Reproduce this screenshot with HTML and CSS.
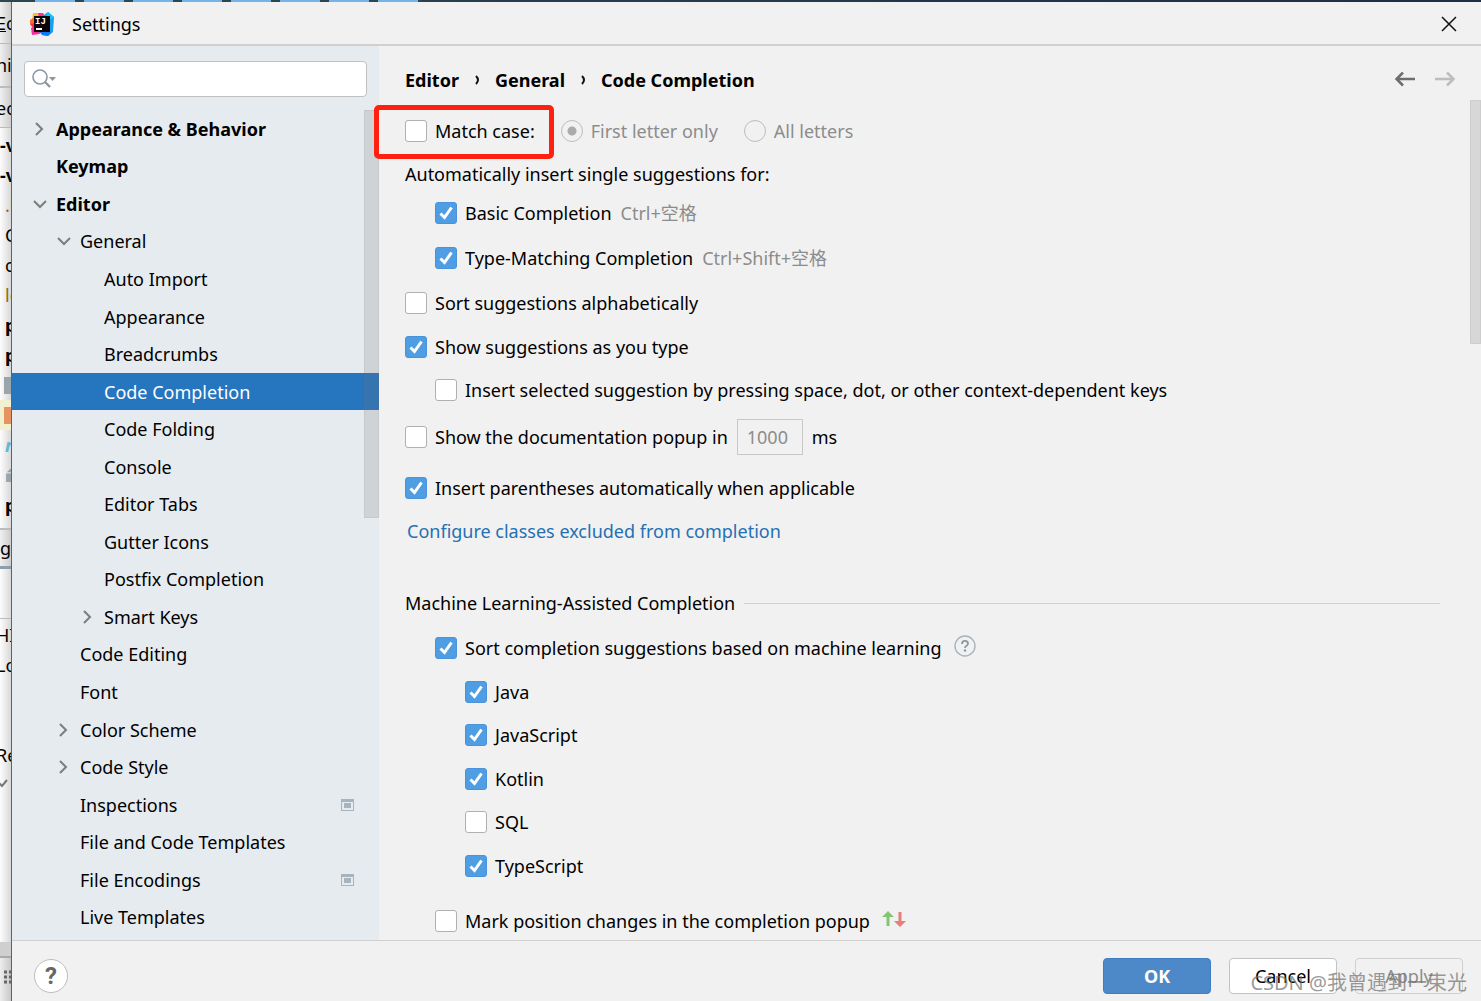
FILE: index.html
```html
<!DOCTYPE html>
<html lang="en">
<head>
<meta charset="utf-8">
<title>Settings</title>
<link rel="stylesheet" href="styles.css">
</head>
<body>
<div class="desktop-edge"></div>
<div class="workspace">
  <div class="backdrop" aria-hidden="true">
    <div class="bd-bar bd-menu"><span><u>E</u>c</span></div>
    <div class="bd-bar bd-nav">ni</div>
    <div class="bd-bar bd-tab">ec</div>
    <div class="bd-code">
      <b class="flush">-v</b>
      <b class="flush">-v</b>
      <span class="olive">.i</span>
      <span>C</span>
      <span>c</span>
      <span class="olive">lo</span>
      <b>p</b>
      <b>p</b>
      <span class="mark"><i class="square"></i></span>
      <span class="mark highlight"><i class="square orange"></i></span>
      <b class="cyan">r</b>
      <span class="mark"><svg width="10" height="20" viewBox="0 0 10 20"><path d="M3 8h7v12H3zM4 6l5-5h1v5z" fill="#9aa5ab"/></svg></span>
      <b>p</b>
    </div>
    <div class="bd-bar bd-tool">g</div>
    <div class="bd-log">
      <span>HI</span>
      <span>Lo</span>
      <span></span>
      <span></span>
      <span>Re</span>
      <svg width="11" height="20" viewBox="0 0 11 20"><path d="M-1 10l3 3 5-6" fill="none" stroke="#777" stroke-width="2"/></svg>
    </div>
    <div class="bd-status"></div>
    <div class="bd-dots"><svg width="11" height="14" viewBox="0 0 11 14"><path d="M4 2h3m2 0h2M4 7h3m2 0h2M4 12h3m2 0h2" stroke="#666" stroke-width="3"/></svg></div>
  </div>

  <div class="dialog" role="dialog" aria-label="Settings">
    <header class="titlebar">
      <svg class="logo" width="24" height="24" viewBox="0 0 24 24">
        <path d="M3 1l7 0 3 6-6 6-5-5z" fill="#fdb93a"/>
        <path d="M0 8l5-3 3 10-3 1-5-4z" fill="#f9702b"/>
        <path d="M8 1l5 0 3 5-6 3z" fill="#ff318c"/>
        <path d="M1 16l7-4 5 8-4 2-7 1z" fill="#f2309b"/>
        <path d="M0 12l5-1-2 5z" fill="#fe2857"/>
        <path d="M14 3l4-3 6 5-1 15-5 4-6-1-1-5z" fill="#1a9cf0"/>
        <path d="M16 3l2-3 6 5-4 3z" fill="#18c4f5"/>
        <path d="M10 20h11l-3 4-6-1z" fill="#087cfa"/>
        <rect x="4" y="4" width="16" height="16" fill="#0b0508"/>
        <text x="5" y="12" font-family="Liberation Mono, monospace" font-weight="700" font-size="9" fill="#fff">IJ</text>
        <rect x="6" y="16" width="6" height="2" fill="#fff"/>
      </svg>
      <span class="title">Settings</span>
      <button class="icon-button close" aria-label="Close">
        <svg width="16" height="16" viewBox="0 0 16 16"><path d="M1 1l14 14M15 1L1 15" stroke="#111" stroke-width="1.5"/></svg>
      </button>
    </header>

    <div class="body">
      <aside class="sidebar">
        <div class="search">
          <svg width="26" height="20" viewBox="0 0 26 20"><circle cx="8" cy="8" r="7" fill="none" stroke="#8b98a3" stroke-width="1.6"/><path d="M13 13l5 5" stroke="#8b98a3" stroke-width="2.4"/><path d="M17 8h7l-3.500 4z" fill="#8b98a3"/></svg>
          <input type="text" aria-label="Search settings">
        </div>
        <ul class="tree">
          <li class="top"><svg class="chev" viewBox="0 0 16 16"><path d="M4 2l6 6-6 6"/></svg>Appearance &amp; Behavior</li>
          <li class="top"><span class="chev"></span>Keymap</li>
          <li class="top"><svg class="chev" viewBox="0 0 16 16"><path d="M2 5l6 6 6-6"/></svg>Editor</li>
          <li class="l1"><svg class="chev" viewBox="0 0 16 16"><path d="M2 5l6 6 6-6"/></svg>General</li>
          <li class="l2"><span class="chev"></span>Auto Import</li>
          <li class="l2"><span class="chev"></span>Appearance</li>
          <li class="l2"><span class="chev"></span>Breadcrumbs</li>
          <li class="l2 selected"><span class="chev"></span>Code Completion</li>
          <li class="l2"><span class="chev"></span>Code Folding</li>
          <li class="l2"><span class="chev"></span>Console</li>
          <li class="l2"><span class="chev"></span>Editor Tabs</li>
          <li class="l2"><span class="chev"></span>Gutter Icons</li>
          <li class="l2"><span class="chev"></span>Postfix Completion</li>
          <li class="l2"><svg class="chev" viewBox="0 0 16 16"><path d="M4 2l6 6-6 6"/></svg>Smart Keys</li>
          <li class="l1"><span class="chev"></span>Code Editing</li>
          <li class="l1"><span class="chev"></span>Font</li>
          <li class="l1"><svg class="chev" viewBox="0 0 16 16"><path d="M4 2l6 6-6 6"/></svg>Color Scheme</li>
          <li class="l1"><svg class="chev" viewBox="0 0 16 16"><path d="M4 2l6 6-6 6"/></svg>Code Style</li>
          <li class="l1"><span class="chev"></span>Inspections<svg class="project" viewBox="0 0 13 12"><path d="M0 0h13v12H0zM1 3v8h11V3z" fill-rule="evenodd"/><path d="M3 4h7v5H3z"/></svg></li>
          <li class="l1"><span class="chev"></span>File and Code Templates</li>
          <li class="l1"><span class="chev"></span>File Encodings<svg class="project" viewBox="0 0 13 12"><path d="M0 0h13v12H0zM1 3v8h11V3z" fill-rule="evenodd"/><path d="M3 4h7v5H3z"/></svg></li>
          <li class="l1"><span class="chev"></span>Live Templates</li>
        </ul>
        <div class="scroll-thumb tree-thumb"></div>
      </aside>

      <main class="content">
        <div class="heading">
          <nav class="crumbs" aria-label="Breadcrumb">
            <span>Editor</span>
            <svg width="6" height="12" viewBox="0 0 6 12"><path d="M2 2q2 2 2 4q0 2-2 4"/></svg>
            <span>General</span>
            <svg width="6" height="12" viewBox="0 0 6 12"><path d="M2 2q2 2 2 4q0 2-2 4"/></svg>
            <span>Code Completion</span>
          </nav>
          <div class="history">
            <button class="icon-button" aria-label="Back"><svg width="20" height="16" viewBox="0 0 20 16"><path d="M20 7H2M8 .5L1.500 7L8 13.500" fill="none" stroke="#6e6e6e" stroke-width="2.600"/></svg></button>
            <button class="icon-button" aria-label="Forward" disabled><svg width="20" height="16" viewBox="0 0 20 16"><path d="M0 7h18M12 .5L18.500 7L12 13.500" fill="none" stroke="#bdbdbd" stroke-width="2.600"/></svg></button>
          </div>
        </div>

        <form class="options">
          <div class="row first">
            <label class="option case"><input type="checkbox">Match case:</label>
            <label class="option muted"><input type="radio" name="case" checked disabled>First letter only</label>
            <label class="option muted"><input type="radio" name="case" disabled>All letters</label>
            <div class="callout"></div>
          </div>
          <div class="row snug">Automatically insert single suggestions for:</div>
          <div class="row indent tight"><label class="option"><input type="checkbox" checked>Basic Completion</label><span class="shortcut">Ctrl+空格</span></div>
          <div class="row indent"><label class="option"><input type="checkbox" checked>Type-Matching Completion</label><span class="shortcut">Ctrl+Shift+空格</span></div>
          <div class="row"><label class="option"><input type="checkbox">Sort suggestions alphabetically</label></div>
          <div class="row medium"><label class="option"><input type="checkbox" checked>Show suggestions as you type</label></div>
          <div class="row indent snug"><label class="option"><input type="checkbox">Insert selected suggestion by pressing space, dot, or other context-dependent keys</label></div>
          <div class="row delay"><label class="option"><input type="checkbox">Show the documentation popup in</label><input class="field" type="text" value="1000" aria-label="Delay in milliseconds" disabled><span>ms</span></div>
          <div class="row snug"><label class="option"><input type="checkbox" checked>Insert parentheses automatically when applicable</label></div>
          <div class="row link-row snug"><a href="#">Configure classes excluded from completion</a></div>

          <div class="row section">Machine Learning-Assisted Completion</div>
          <div class="row indent">
            <label class="option"><input type="checkbox" checked>Sort completion suggestions based on machine learning</label>
            <svg class="hint" width="22" height="22" viewBox="0 0 22 22"><circle cx="11" cy="11" r="10" fill="none" stroke="#a9b3ba" stroke-width="1.400"/><path d="M8 9q0-3.200 3-3.200t3 2.700q0 1.500-1.700 2.500q-1.300.8-1.300 2" fill="none" stroke="#8b979f" stroke-width="1.800"/><circle cx="11" cy="15.500" r="1.200" fill="#8b979f"/></svg>
          </div>
          <div class="languages">
            <label class="option"><input type="checkbox" checked>Java</label>
            <label class="option"><input type="checkbox" checked>JavaScript</label>
            <label class="option"><input type="checkbox" checked>Kotlin</label>
            <label class="option"><input type="checkbox">SQL</label>
            <label class="option"><input type="checkbox" checked>TypeScript</label>
          </div>
          <div class="row indent last">
            <label class="option"><input type="checkbox">Mark position changes in the completion popup</label>
            <svg class="hint" width="24" height="18" viewBox="0 0 24 18"><path d="M4.500 16V7H0L6 1l6 6H7.500v9z" fill="#84c573"/><path d="M16.500 2v9H12l6 6 6-6h-4.500V2z" fill="#e57f7a"/></svg>
          </div>
        </form>
        <div class="scroll-thumb page-thumb"></div>
      </main>
    </div>

    <footer class="footer">
      <button class="help" aria-label="Help">?</button>
      <button class="button primary">OK</button>
      <button class="button">Cancel</button>
      <button class="button" disabled>Apply</button>
      <div class="watermark">CSDN @我曾遇到一束光</div>
    </footer>
  </div>
</div>
</body>
</html>
```
FILE: styles.css
```css
* { box-sizing: border-box; }

body {
  margin: 0;
  min-height: 100vh;
  display: flex;
  flex-direction: column;
  overflow: hidden;
  background: #f1f1f1;
  color: #000;
  font: 18px/28px "Noto Sans", "Noto Sans CJK SC", sans-serif;
}

button, input { font: inherit; color: inherit; margin: 0; }

.desktop-edge {
  height: 2px;
  background:
    repeating-linear-gradient(90deg, #74b4e8 0 40px, #2c4652 40px 49px) 35px 0 / 387px 2px no-repeat,
    linear-gradient(90deg, #2c4652, #1e2d44);
}

.workspace { flex: 1; display: flex; }

/* Sliver of the editor window behind the dialog */
.backdrop {
  width: 11px;
  flex: none;
  overflow: hidden;
  white-space: nowrap;
  display: flex;
  flex-direction: column;
  background: linear-gradient(90deg, #fdfdfd, #d8d8d8);
}
.bd-bar {
  flex: none;
  display: flex;
  align-items: center;
  text-indent: -4px;
  background: linear-gradient(90deg, #f0f0f0, #cccccc);
  border-bottom: 1px solid #bbb;
}
.bd-menu { height: 42px; }
.bd-nav { height: 44px; border-bottom-width: 2px; }
.bd-tab { height: 40px; }
.bd-code { padding-top: 2px; height: 400px; }
.bd-code > *, .bd-log > span { display: block; height: 30px; padding-left: 5px; line-height: 30px; }
.bd-code .flush, .bd-log > span { padding-left: 0; }
.bd-log > span { text-indent: -4px; }
.olive { color: #8a6d1f; }
.cyan { color: #5fbad6; font-style: italic; }
.bd-code .mark { display: flex; align-items: center; padding-left: 4px; }
.highlight { background: #f3f0cf; }
.square { width: 10px; height: 17px; flex: none; background: #9aa5ab; }
.orange { background: #e6945f; }
.bd-tool { height: 41px; text-indent: 0; border-top: 2px solid #bbb; border-bottom: 3px solid #8f9bae; }
.bd-log { flex: 1; margin-top: 49px; padding-top: 1px; border-top: 1px solid #bbb; }
.bd-log svg { margin-top: 3px; }
.bd-status { height: 16px; flex: none; background: #cfcfcf; border-bottom: 2px solid #aaa; }
.bd-dots { height: 43px; flex: none; padding-top: 5px; background: linear-gradient(90deg, #eee, #c8c8c8); }

.dialog {
  flex: 1;
  min-width: 0;
  display: flex;
  flex-direction: column;
  border-left: 1px solid #626262;
  background: #f1f1f1;
}

.titlebar {
  height: 44px;
  display: flex;
  align-items: center;
  gap: 18px;
  padding: 2px 24px 0 18px;
  border-bottom: 2px solid #d0d0d0;
}
.icon-button { border: 0; padding: 0; background: none; display: flex; }
.close { margin-left: auto; }

.body { flex: 1; display: flex; }

.sidebar {
  position: relative;
  width: 367px;
  flex: none;
  display: flex;
  flex-direction: column;
  padding: 15px 0 4px;
  background: #e6ebef;
}
.search {
  height: 36px;
  margin: 0 12px 13px;
  display: flex;
  align-items: center;
  padding: 0 7px;
  background: #fff;
  border: 1px solid #c0c0c0;
  border-radius: 4px;
}
.search input { flex: 1; min-width: 0; border: 0; background: none; outline: 0; }

.tree {
  flex: 1;
  display: flex;
  flex-direction: column;
  margin: 0;
  padding: 0;
  list-style: none;
}
.tree li { flex: 1; display: flex; align-items: center; gap: 8px; padding: 0 25px 0 20px; }
.tree .l1 { padding-left: 44px; }
.tree .l2 { padding-left: 68px; }
.tree .top { font-weight: 700; }
.tree .selected { background: #2675bf; color: #fff; }
.chev { width: 16px; height: 16px; flex: none; fill: none; stroke: #7d7d7d; stroke-width: 2; }
.project { width: 13px; height: 12px; margin-left: auto; fill: #a8b4bd; }

.scroll-thumb { position: absolute; right: 0; background: rgba(115, 115, 115, 0.2); border: 1px solid rgba(115, 115, 115, 0.1); }
.tree-thumb { top: 64px; width: 15px; height: 408px; }
.page-thumb { top: 54px; width: 11px; height: 244px; }

.content { position: relative; flex: 1; min-width: 0; padding: 20px 41px 4px 26px; }

.heading { display: flex; align-items: center; justify-content: space-between; margin-right: -15px; }
.crumbs { display: flex; align-items: center; gap: 15px; font-weight: 700; }
.crumbs svg { fill: none; stroke: #111; stroke-width: 2; }
.history { display: flex; gap: 20px; }

.row { position: relative; display: flex; align-items: center; height: 28px; margin-top: 17px; gap: 9px; }
.medium { margin-top: 16px; }
.snug { margin-top: 15px; }
.tight { margin-top: 11px; }
.first { margin-top: 23px; gap: 26px; }
.indent { margin-left: 30px; }
.delay { height: 36px; margin: 15px 0 19px; }
.link-row { padding-left: 2px; }
.section { margin-top: 44px; }
.section::after { content: ""; flex: 1; height: 1px; background: #d0d0d0; }
.last { margin-top: 27px; }

.option { display: flex; align-items: center; gap: 8px; height: 28px; white-space: nowrap; }
.muted, .shortcut { color: #8c8c8c; }

input[type="checkbox"], input[type="radio"] {
  appearance: none;
  flex: none;
  width: 22px;
  height: 22px;
  background: #fff;
  border: 1px solid #b0b0b0;
  border-radius: 3px;
}
input[type="checkbox"]:checked {
  border-color: #4a93dc;
  background: #4f9ee3 url("data:image/svg+xml,%3Csvg xmlns='http://www.w3.org/2000/svg' viewBox='0 0 20 20'%3E%3Cpath d='M4.500 10.500l4 4L15.500 4.500' fill='none' stroke='white' stroke-width='3'/%3E%3C/svg%3E");
}
input[type="radio"] { border-color: #bdbdbd; border-radius: 50%; background: none; }
input[type="radio"]:checked { background: radial-gradient(circle, #ababab 0 4px, transparent 5px); }

/* Red frame drawn round the option */
.callout {
  position: absolute;
  left: -31px;
  top: -12px;
  width: 180px;
  height: 54px;
  border: 5px solid #ff2010;
  border-radius: 5px;
  pointer-events: none;
}

.field { width: 66px; height: 36px; padding: 0 9px; border: 1px solid #c8c8c8; background: none; color: #8c8c8c; }
a { color: #2470b3; text-decoration: none; }
.hint { margin: 0 0 4px 3px; }

.languages { margin-left: 60px; }
.languages .option { margin-top: 16px; }
.languages .option:nth-child(even) { margin-top: 15px; }

.footer {
  position: relative;
  display: flex;
  align-items: center;
  gap: 18px;
  height: 61px;
  padding: 17px 18px 7px 22px;
  border-top: 1px solid #d0d0d0;
}
.help {
  width: 34px;
  height: 34px;
  margin-right: auto;
  padding: 0;
  border: 1px solid #bdbdbd;
  border-radius: 50%;
  background: #fff;
  color: #666;
  font: 700 24px/30px Roboto, sans-serif;
}
.button { width: 108px; height: 36px; padding: 0; border: 1px solid #c2c2c2; border-radius: 4px; background: #fff; }
.button:disabled { background: none; color: #8c8c8c; border-color: #d0d0d0; }
.primary { border-color: #3f7dc0; background: #4d89c8; color: #fff; font-weight: 700; }

.watermark {
  position: absolute;
  right: 14px;
  bottom: 4px;
  color: rgba(110, 110, 110, 0.7);
  font-size: 20px;
  pointer-events: none;
}
```
